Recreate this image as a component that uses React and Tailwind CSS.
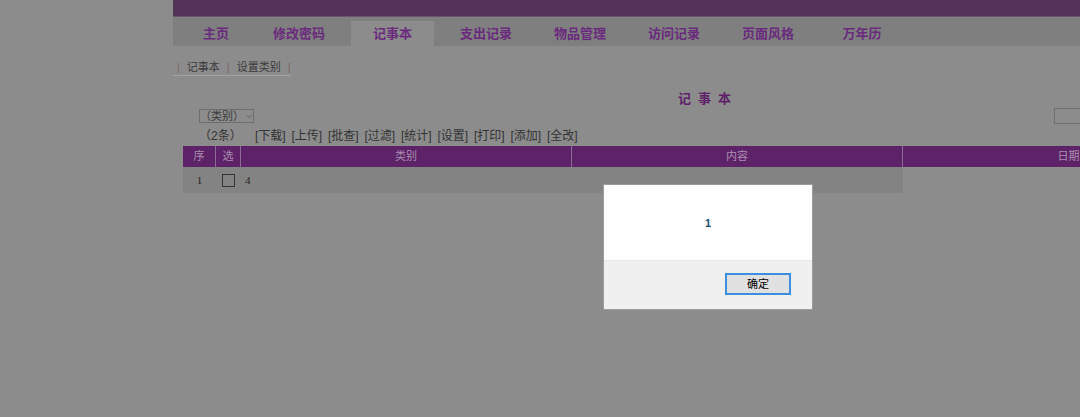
import { ChevronDown } from 'lucide-react';

const tabs = [
  { label: '主页', cls: 'w-[86px]' },
  { label: '修改密码', cls: 'w-[80px]' },
  { label: '记事本', cls: 'w-[83px] ml-[12px] bg-[#8c8c8c]' },
  { label: '支出记录', cls: 'w-[94px] ml-[5px]' },
  { label: '物品管理', cls: 'w-[94px]' },
  { label: '访问记录', cls: 'w-[94px]' },
  { label: '页面风格', cls: 'w-[94px]' },
  { label: '万年历', cls: 'w-[94px]' },
];

const actions = ['下载', '上传', '批查', '过滤', '统计', '设置', '打印', '添加', '全改'];

const App = () => {
  return (
    <div className="relative h-[417px] w-[1080px] overflow-hidden bg-[#8c8c8c] font-['Liberation_Sans','Noto_Sans_CJK_SC',sans-serif]">
      <div className="ml-[173px] w-[907px]">
        {/* Banner */}
        <div className="h-[17px] border-b border-[#6c5470] bg-[#533358]" />

        {/* Tabs */}
        <div className="flex h-[29px] items-end bg-[#7f7f7f]">
          {tabs.map((t) => (
            <div
              key={t.label}
              className={`flex h-[25px] items-center justify-center text-[13px] font-bold text-[#6a2a7e] ${t.cls}`}
            >
              {t.label}
            </div>
          ))}
        </div>

        {/* Breadcrumb */}
        <div className="pt-[13px]">
          <div className="flex h-[17px] w-[118px] items-center border-b border-[#a3a3a3] pl-[4px] text-[11px] leading-[16px] text-[#3a3a3a]">
            <span className="text-[#7a6565]">|</span>
            <span className="ml-[7px]">记事本</span>
            <span className="ml-[7px] text-[#7a6565]">|</span>
            <span className="ml-[7px]">设置类别</span>
            <span className="ml-[7px] text-[#7a6565]">|</span>
          </div>
        </div>

        {/* Title */}
        <div className="mt-[16px] flex h-[14px] items-center">
          <span className="ml-[505px] text-[13px] font-bold leading-[14px] tracking-[7px] text-[#5e2169]">
            记事本
          </span>
        </div>

        {/* Select row */}
        <div className="mt-[2px] flex h-[16px] items-center">
          <div className="ml-[26px] flex h-[14px] w-[55px] items-center border border-[#6e6e6e] text-[11px] leading-[12px] text-[#3a3a3a]">
            <span>（类别）</span>
            <ChevronDown className="ml-[4px] h-[9px] w-[9px]" strokeWidth={1.5} />
          </div>
          <div className="ml-auto h-[16px] w-[26px] border border-r-0 border-[#6e6e6e]" />
        </div>

        {/* Toolbar */}
        <div className="mt-[4px] flex h-[16px] items-center text-[12px] leading-[16px] text-[#333]">
          <span className="ml-[26px] w-[56px]">（2条）</span>
          <div className="flex">
            {actions.map((a) => (
              <span key={a} className="w-[36.5px]">
                [{a}]
              </span>
            ))}
          </div>
        </div>

        {/* Table */}
        <div className="ml-[10px] mt-[2px] w-[897px] overflow-hidden">
          <div className="grid w-[1051px] grid-cols-[33px_25px_331px_331px_331px] text-[11px]">
            <div className="flex h-[21px] items-center justify-center border-r border-[#8a6e90] bg-[#5e2269] text-[#a88fae]">序</div>
            <div className="flex h-[21px] items-center justify-center border-r border-[#8a6e90] bg-[#5e2269] text-[#a88fae]">选</div>
            <div className="flex h-[21px] items-center justify-center border-r border-[#8a6e90] bg-[#5e2269] text-[#a88fae]">类别</div>
            <div className="flex h-[21px] items-center justify-center border-r border-[#8a6e90] bg-[#5e2269] text-[#a88fae]">内容</div>
            <div className="flex h-[21px] items-center justify-center bg-[#5e2269] text-[#a88fae]">日期</div>

            <div className="flex h-[26px] items-center justify-center bg-[#838383] font-['Liberation_Serif',serif] text-[11px] text-[#262626]">1</div>
            <div className="flex h-[26px] items-center justify-center bg-[#838383]">
              <div className="h-[13px] w-[13px] border border-[#333]" />
            </div>
            <div className="flex h-[26px] items-center bg-[#838383] pl-[4px] font-['Liberation_Serif',serif] text-[11px] text-[#262626]">4</div>
            <div className="h-[26px] bg-[#838383]" />
            <div className="h-[26px] bg-[#8d8d8d]" />
          </div>
        </div>
      </div>

      {/* Alert dialog */}
      <div className="fixed left-[603px] top-[184px] flex h-[126px] w-[210px] flex-col border border-[#9c9c9c] bg-white">
        <div className="flex h-[75px] items-center justify-center pt-[1px] text-[11px] font-semibold text-[#1f4e79]">
          1
        </div>
        <div className="flex flex-1 items-start justify-end border-t border-[#e6e6e6] bg-[#f0f0f0] pr-[21px] pt-[12px]">
          <button className="flex h-[22px] w-[66px] items-center justify-center border-2 border-[#3b8ee0] bg-[#e1e1e1] text-[11px] text-black">
            确定
          </button>
        </div>
      </div>
    </div>
  );
};

export default App;
